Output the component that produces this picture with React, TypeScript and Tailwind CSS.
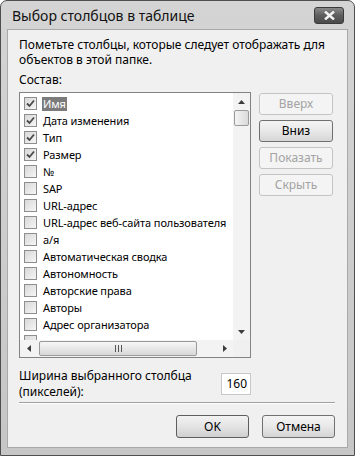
const columns: { name: string; checked: boolean }[] = [
  { name: "Имя", checked: true },
  { name: "Дата изменения", checked: true },
  { name: "Тип", checked: true },
  { name: "Размер", checked: true },
  { name: "№", checked: false },
  { name: "SAP", checked: false },
  { name: "URL-адрес", checked: false },
  { name: "URL-адрес веб-сайта пользователя", checked: false },
  { name: "а/я", checked: false },
  { name: "Автоматическая сводка", checked: false },
  { name: "Автономность", checked: false },
  { name: "Авторские права", checked: false },
  { name: "Авторы", checked: false },
  { name: "Адрес организатора", checked: false },
  { name: "", checked: false },
];

function CheckBox({ checked }: { checked: boolean }) {
  return (
    <span className="flex h-[13px] w-[13px] shrink-0 items-center justify-center border border-[#8e8e8e] bg-gradient-to-br from-[#d8d8d8] to-[#f6f6f6]">
      {checked && (
        <svg width="9" height="9" viewBox="0 0 9 9">
          <path d="M1 4.5 L3.5 7 L8 1.5" fill="none" stroke="#4a4a4a" strokeWidth="1.8" />
        </svg>
      )}
    </span>
  );
}

function SideButton({ label, enabled = false }: { label: string; enabled?: boolean }) {
  return (
    <button
      className={
        enabled
          ? "h-[22px] w-full rounded-[3px] border border-[#707070] bg-gradient-to-b from-[#f4f4f4] via-[#e8e8e8] to-[#d6d6d6] text-[12px] text-black"
          : "h-[22px] w-full rounded-[3px] border border-[#c4c4c4] bg-[#f4f4f4] text-[12px] text-[#a3a3a3]"
      }
    >
      {label}
    </button>
  );
}

function Arrow({ dir }: { dir: "up" | "down" | "left" | "right" }) {
  const d = {
    up: "M0 4 L3.5 0 L7 4 Z",
    down: "M0 0 L7 0 L3.5 4 Z",
    left: "M4 0 L4 7 L0 3.5 Z",
    right: "M0 0 L4 3.5 L0 7 Z",
  }[dir];
  const vert = dir === "up" || dir === "down";
  return (
    <svg width={vert ? 7 : 4} height={vert ? 4 : 7} viewBox={vert ? "0 0 7 4" : "0 0 4 7"}>
      <path d={d} fill="#3c3c3c" />
    </svg>
  );
}

export default function App() {
  return (
    <div
      className="flex h-[456px] w-[355px] flex-col overflow-hidden rounded-t-[7px] border border-[#4e4e4e] bg-gradient-to-b from-[#d4d4d4] to-[#c6c6c6] text-[12px] text-black"
      style={{ fontFamily: '"Segoe UI", "Noto Sans", sans-serif' }}
    >
      <div className="flex h-[28px] shrink-0 items-center justify-between pl-[11px] pr-[10px]">
        <span className="text-[14px] text-[#111]">Выбор столбцов в таблице</span>
        <span className="mt-[1px] flex h-[17px] w-[30px] items-center justify-center rounded-[3px] border border-[#3a3a3a] bg-gradient-to-b from-[#8a8a8a] via-[#5e5e5e] to-[#4a4a4a]">
          <svg width="11" height="9" viewBox="0 0 11 9">
            <path d="M1 0.5 L10 8.5 M10 0.5 L1 8.5" stroke="#f4f4f4" strokeWidth="2.4" />
          </svg>
        </span>
      </div>

      <div className="mx-[6px] mb-[7px] flex flex-1 flex-col border border-[#a9a9a9] bg-[#f0f0f0] pl-[11px] pr-[12px] pt-[7px]">
        <p className="leading-[15px]">
          Пометьте столбцы, которые следует отображать для объектов в этой папке.
        </p>
        <div className="mt-[5px] leading-[15px]">Состав:</div>

        <div className="mt-[5px] flex gap-[8px]">
          <div className="flex h-[266px] w-[232px] shrink-0 flex-col border border-[#838383] bg-white">
            <div className="flex min-h-0 flex-1">
              <ul className="min-w-0 flex-1 overflow-hidden pt-[2px] text-[11px] tracking-[-0.1px]">
                {columns.map((c, i) => (
                  <li key={i} className="flex h-[17px] items-center gap-[5px] whitespace-nowrap pl-[4px]">
                    <CheckBox checked={c.checked} />
                    {c.name && (
                      <span
                        className={
                          i === 0
                            ? "bg-[#7b7b7b] px-[1px] leading-[14px] text-white"
                            : "px-[1px] leading-[14px]"
                        }
                      >
                        {c.name}
                      </span>
                    )}
                  </li>
                ))}
              </ul>
              <div className="flex w-[17px] shrink-0 flex-col items-center bg-[#f3f3f3]">
                <div className="flex h-[17px] items-center justify-center">
                  <Arrow dir="up" />
                </div>
                <div className="h-[16px] w-[15px] rounded-[2px] border border-[#9a9a9a] bg-gradient-to-r from-[#f4f4f4] to-[#dadada]" />
                <div className="flex-1" />
                <div className="flex h-[17px] items-center justify-center">
                  <Arrow dir="down" />
                </div>
              </div>
            </div>
            <div className="flex h-[17px] shrink-0">
              <div className="flex flex-1 items-center bg-[#f3f3f3]">
                <div className="flex w-[17px] justify-center">
                  <Arrow dir="left" />
                </div>
                <div className="ml-[2px] flex h-[15px] w-[158px] items-center justify-center rounded-[2px] border border-[#9a9a9a] bg-gradient-to-b from-[#f6f6f6] to-[#d8d8d8]">
                  <svg width="7" height="7" viewBox="0 0 7 7">
                    <path d="M0.5 0 V7 M3.5 0 V7 M6.5 0 V7" stroke="#555" strokeWidth="1" />
                  </svg>
                </div>
                <div className="flex-1" />
                <div className="flex w-[17px] justify-center">
                  <Arrow dir="right" />
                </div>
              </div>
              <div className="w-[17px] bg-[#f0f0f0]" />
            </div>
          </div>

          <div className="flex w-[74px] flex-col gap-[5px] pt-[1px]">
            <SideButton label="Вверх" />
            <SideButton label="Вниз" enabled />
            <SideButton label="Показать" />
            <SideButton label="Скрыть" />
          </div>
        </div>

        <div className="mt-[10px] flex w-[232px] items-center justify-between">
          <div className="leading-[16px]">
            <div>Ширина выбранного столбца</div>
            <div>(пикселей):</div>
          </div>
          <span className="flex h-[22px] w-[30px] items-center justify-end border border-[#c8c8c8] bg-white pr-[3px]">
            160
          </span>
        </div>

        <div className="mt-[2px] h-[2px] border-t border-b border-t-[#a0a0a0] border-b-white" />

        <div className="mt-[11px] flex justify-end gap-[13px]">
          <button className="h-[23px] w-[73px] rounded-[3px] border border-[#5e5e5e] bg-gradient-to-b from-[#f2f2f2] via-[#e4e4e4] to-[#cfcfcf] text-[12px]">
            OK
          </button>
          <button className="h-[23px] w-[73px] rounded-[3px] border border-[#707070] bg-gradient-to-b from-[#f4f4f4] via-[#e8e8e8] to-[#d4d4d4] text-[12px]">
            Отмена
          </button>
        </div>
      </div>
    </div>
  );
}
